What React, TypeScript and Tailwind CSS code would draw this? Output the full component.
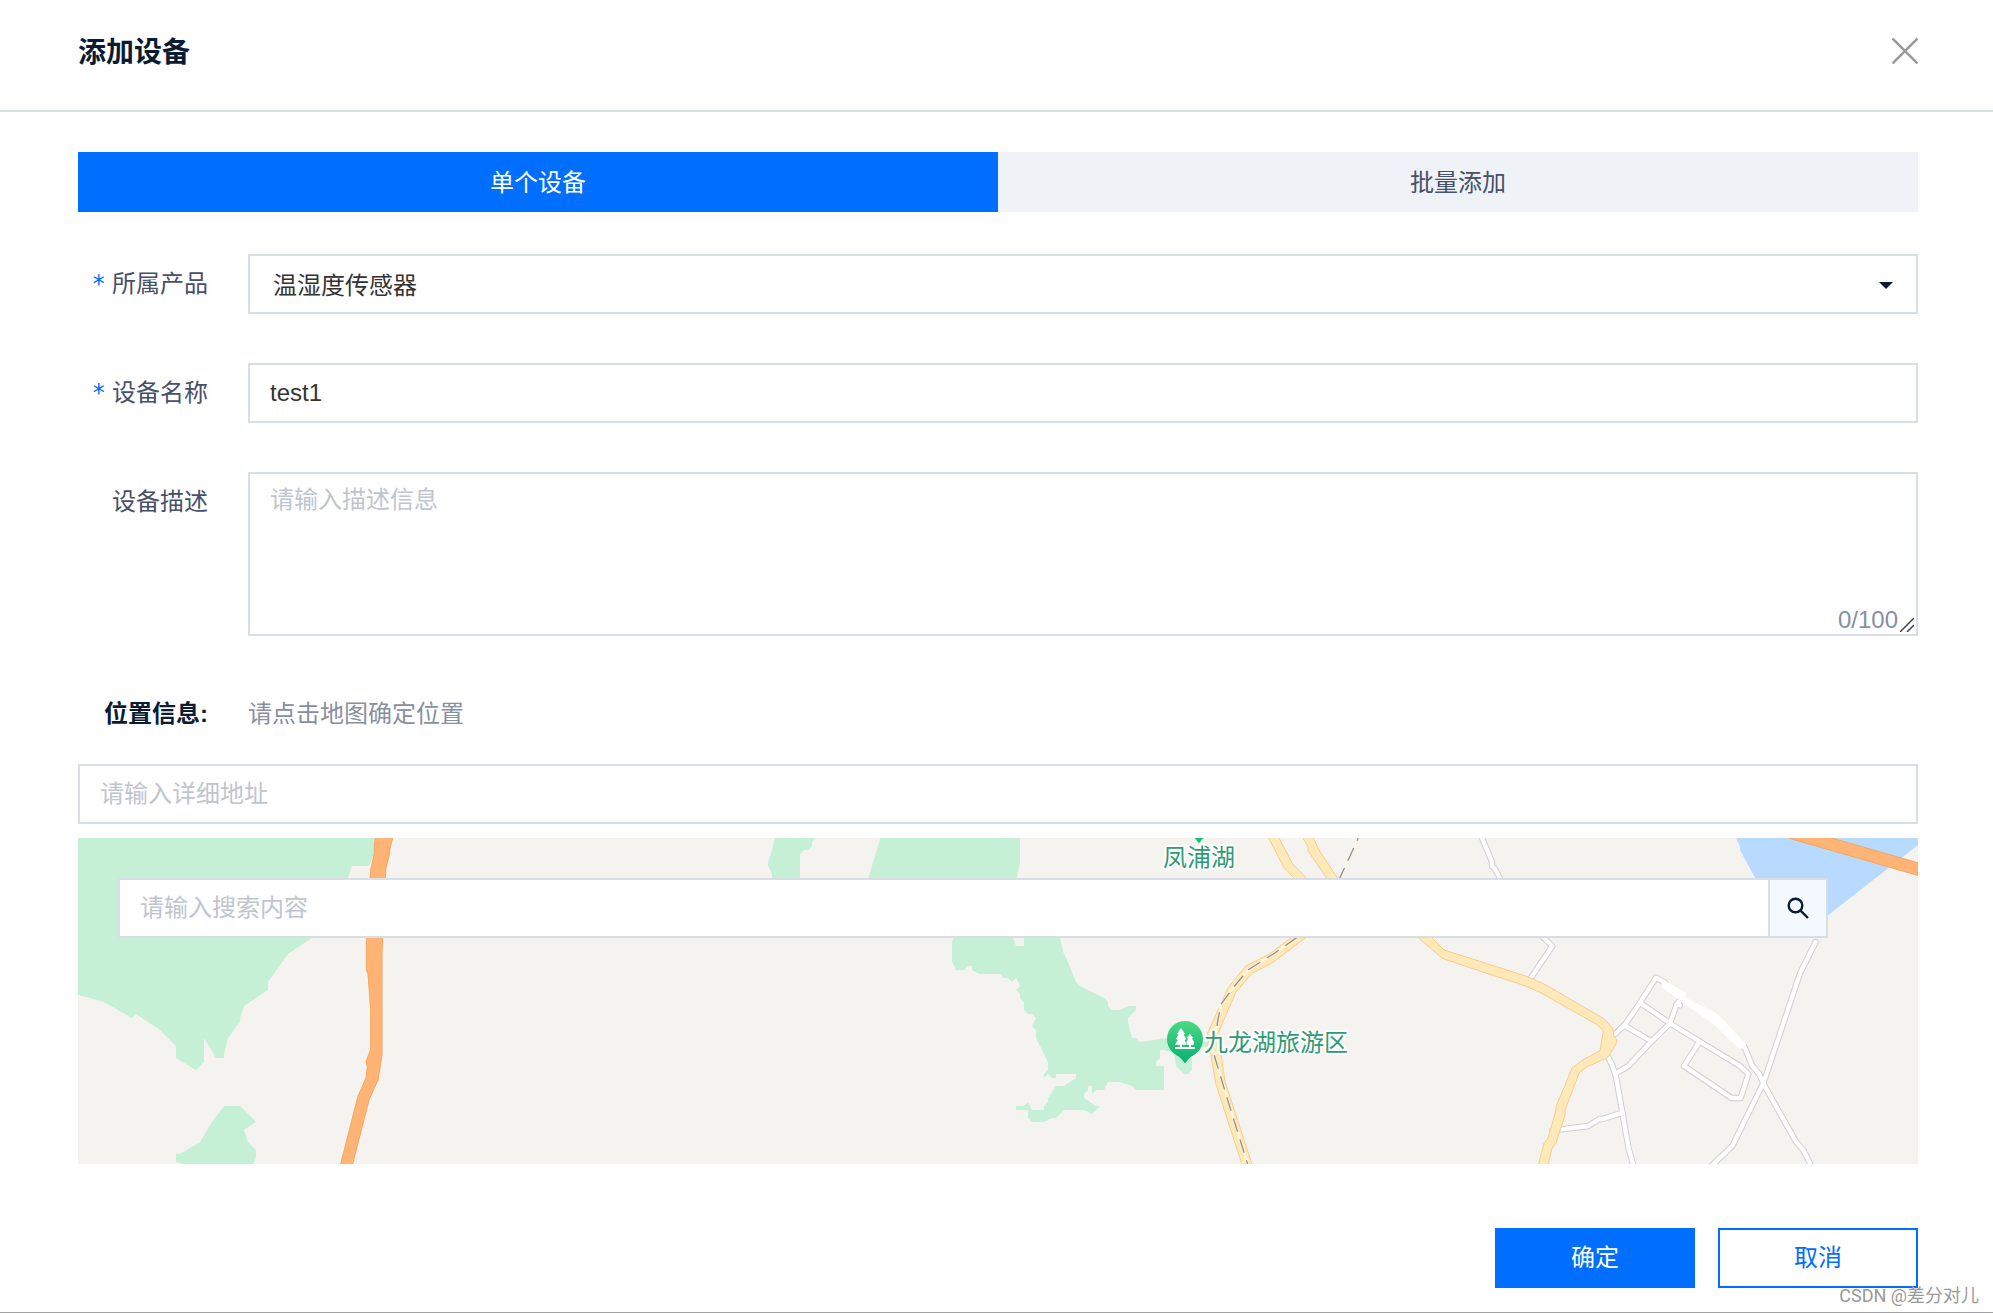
import React, { useState } from 'react';

const fieldClass =
    'block w-full h-[60px] px-5 border-2 border-[#d8dee7] bg-white text-2xl text-[#333333] placeholder-[#c0c5cd] outline-none focus:border-[#006eff]';

const MapCanvas: React.FC = () => (
    <svg
        className="block w-full h-[326px] bg-[#f4f3ef]"
        viewBox="0 0 1840 326"
        preserveAspectRatio="xMidYMid slice"
        role="img"
        aria-label="地图"
    >
        <defs>
            <linearGradient id="pin" x1="0" y1="0" x2="0" y2="1">
                <stop offset="0" stopColor="#4bd983" />
                <stop offset="1" stopColor="#08ae72" />
            </linearGradient>
        </defs>
        <g transform="scale(0.33333)">
            {/* west: forest and trunk road */}
            <g transform="translate(-54 -54)">
                <g fill="#c6f0d5">
                    <path d="M54 54H945L942 100L932 128L925 138H876L864 175L756 353L684 402L624 486V510L552 558L540 594V606L504 654L492 702V714H468L432 654V726L408 750L348 714V678L300 630L228 582L216 594L132 546L54 524Z" />
                    <path d="M492 858H540L588 905L552 930L564 966L588 990V1014L579 1032H372L348 1026V1002H360L420 966L456 906Z" />
                </g>
                <path
                    d="M947 50H999L989 90V100L978 145L976 175L968 353L966 400V705L954 780L927 840L877 1036H841L894 828L918 774L922 740L918 725L932 688V570L924 462L919 450V353L930 175L932 150L943 100V75Z"
                    fill="#ffb475"
                    stroke="#f8a55e"
                    strokeWidth="3"
                />
            </g>

            {/* centre: forest around the lake */}
            <g transform="translate(1866 -54)" fill="#c6f0d5">
                <path d="M225 54H348L336 66V78L324 90H312L300 102V175H216V162L204 138V126L216 90Z" />
                <path d="M541 54H960V126L950 175H505Z" />
                <path d="M760 353H940L948 378H972V353H1080L1091 400L1104 426L1128 486L1140 498L1200 528L1212 534L1224 546V558L1236 570H1260L1284 558H1308V570L1284 594V606L1296 654H1308L1320 666L1392 655L1525 666V678L1476 690V750L1464 762H1452L1428 738L1422 700L1392 690H1380V714L1368 726V738H1392V810H1308L1296 798L1260 786H1224L1212 810H1188L1176 822V798H1164V810L1152 822V834L1188 858H1200L1176 882L1152 870H1092L1068 894H1056L1032 906H996L984 894V870H948V858H972L984 846L996 870H1032V858L1044 846V834L1068 798H1092L1128 774V762H1068V774H1056L1044 762L1032 774V762L1044 750V726L1008 654V630L996 618L1008 594L996 582H984L972 570V546L960 534V522L948 510L960 498L948 474L936 486L924 474H912L900 462H840L816 450V438H804L792 450H768L756 426V366Z" />
            </g>

            {/* secondary roads, railway and pins */}
            <g transform="translate(3006 -54)">
                <g fill="#ffe9b8" stroke="#fbca8b" strokeWidth="3">
                    <path d="M564 50H595L637 130L684 179H647L612 143Z" />
                    <path d="M666 50H698L720 95L776 179H743L684 92V80Z" />
                    <path d="M633 353L564 405L498 437L444 504L423 552L382 640L407 790L487 1036H517L435 785L414 640L468 516L516 460L580 427L597 413L677 353Z" />
                </g>
                <g fill="none">
                    <path d="M835 54L800 130L779 175M650 353L580 402L505 449L462 500L423 553L413 605L398 690L440 830L503 1032" stroke="#fff6e0" strokeWidth="7" />
                    <path d="M835 54L800 130L779 175" stroke="#8f8f8f" strokeWidth="4" strokeDasharray="42 24" strokeDashoffset="33" />
                    <path d="M650 353L580 402L505 449L462 500L423 553L413 605L398 690L440 830L503 1032" stroke="#8f8f8f" strokeWidth="4" strokeDasharray="42 24" />
                </g>
                <path d="M344 54H370L357 70Z" fill="#0fc47b" />
                <path d="M315 603A54 54 0 0 1 369 657C369 684 351 702 333 710Q325 716 315 730Q305 716 297 710C279 702 261 684 261 657A54 54 0 0 1 315 603Z" fill="url(#pin)" />
                <g fill="#ffffff">
                    <path d="M303 624L315 641L311 644L319 657L314 660L320 674H306V682H299V674H285L293 660L288 657L295 644L291 641Z" />
                    <path d="M330 641L339 653L336 656L343 667L340 675H333V682H327V675H322L319 667L324 656L321 653Z" />
                    <rect x="285" y="681" width="60" height="6" rx="2" />
                </g>
            </g>

            {/* east: lake, town streets */}
            <g transform="translate(4206 -54)">
                <path d="M768 54H1314V75L1044 286H880L826 175L780 90V78Z" fill="#b8daff" />
                <path d="M911 50H1041L1320 130V168Z" fill="#ffb475" stroke="#f8a55e" strokeWidth="3" />
                <g fill="none" strokeLinejoin="round">
                    {['#cfcfd5', '#ffffff'].map((color, i) => (
                        <g key={color} stroke={color} strokeWidth={i === 0 ? 19 : 13} strokeLinecap="round">
                            <path d="M2 44L36 125V138L45 147L64 182" />
                            <path d="M185 348L217 378L150 478" />
                            <path d="M405 642L435 614L480 548L528 473L555 488" />
                            <path d="M480 548L570 610L780 738L805 762L782 834H755L612 738L658 666" />
                            <path d="M435 618L515 664" />
                            <path d="M600 556L590 553L570 610L515 664L445 738L408 760M590 553L603 538" />
                            <path d="M382 705L398 740L408 770L446 985L462 1042" />
                            <path d="M217 931L325 918L360 896L364 898L428 878" />
                            <path d="M1007 366L960 460L852 785L757 978L690 1042" />
                            <path d="M793 680L817 738L838 762L855 800L948 965L970 990L996 1042" />
                        </g>
                    ))}
                </g>
                <path d="M545 478L618 518V534L703 576L735 604L799 674L793 688L775 684L700 612L612 550L545 502Z" fill="#ffffff" />
                <path
                    d="M-185 353L-113 415L0 453L134 497L180 517L330 602L350 613L370 632L360 692L312 718L288 735L276 745L228 860V870L204 955L192 970L175 1036H204L216 985L228 970L255 885V870L298 758L322 740L376 716L385 710L408 672L410 660L401 645L398 625L370 595L192 492L142 470L0 424L-108 390L-145 353Z"
                    fill="#ffe9b8"
                    stroke="#fbca8b"
                    strokeWidth="3"
                />
            </g>
        </g>
        <g className="text-2xl" fill="#2e9a74" stroke="#ffffff" strokeWidth="4" strokeLinejoin="round" paintOrder="stroke">
            <text x="1085" y="28">凤浦湖</text>
            <text x="1126" y="213">九龙湖旅游区</text>
        </g>
    </svg>
);

interface FormRowProps {
    label: string;
    htmlFor: string;
    required?: boolean;
    children: React.ReactNode;
}

const FormRow: React.FC<FormRowProps> = ({ label, htmlFor, required, children }) => (
    <div className="flex items-start gap-10">
        <label htmlFor={htmlFor} className="flex w-[130px] shrink-0 items-center justify-end gap-1.5 pt-3 text-2xl leading-9 text-[#475069]">
            {required && <span className="font-['DejaVu_Sans_Mono',monospace] text-[#006eff]">*</span>}
            {label}
        </label>
        <div className="relative min-w-0 flex-1">{children}</div>
    </div>
);

export default function App() {
    const [tab, setTab] = useState<'single' | 'batch'>('single');
    const [product, setProduct] = useState('温湿度传感器');
    const [name, setName] = useState('test1');
    const [description, setDescription] = useState('');

    const tabClass = (active: boolean) =>
        `flex-1 h-[60px] pt-0.5 text-2xl ${active ? 'bg-[#006eff] text-white' : 'bg-[#eff3f8] text-[#475069]'}`;

    return (
        <div className="relative border-b border-[#a3a3a3] bg-white font-['Liberation_Sans','Noto_Sans_CJK_SC',sans-serif]">
            <header className="flex h-28 items-center justify-between border-b-2 border-[#d8dee7] pb-2 pl-[78px] pr-[75px]">
                <h1 className="pt-1 text-[28px] leading-10 font-bold text-[#0a1c33]">添加设备</h1>
                <button type="button" aria-label="关闭">
                    <svg className="h-[26px] w-[26px]" viewBox="0 0 26 26" fill="none" stroke="#999999" strokeWidth="2.5">
                        <path d="M0.5 0.5L25.5 25.5M25.5 0.5L0.5 25.5" />
                    </svg>
                </button>
            </header>

            <form className="pt-10 pb-6 pl-[78px] pr-[75px]" onSubmit={(e) => e.preventDefault()}>
                <div className="flex">
                    <button type="button" className={tabClass(tab === 'single')} onClick={() => setTab('single')}>
                        单个设备
                    </button>
                    <button type="button" className={tabClass(tab === 'batch')} onClick={() => setTab('batch')}>
                        批量添加
                    </button>
                </div>

                <div className="mt-[42px] flex flex-col gap-[49px]">
                    <FormRow label="所属产品" htmlFor="product" required>
                        <select
                            id="product"
                            value={product}
                            onChange={(e) => setProduct(e.target.value)}
                            className="block h-[60px] w-full appearance-none border-2 border-[#d8dee7] bg-white px-[23px] pt-1 text-2xl text-[#333333] outline-none"
                        >
                            <option>温湿度传感器</option>
                        </select>
                        <svg className="pointer-events-none absolute top-7 right-[25px] h-[7px] w-[14px]" viewBox="0 0 14 7" fill="#0a1c33">
                            <path d="M0 0H14L7 7Z" />
                        </svg>
                    </FormRow>

                    <FormRow label="设备名称" htmlFor="name" required>
                        <input id="name" type="text" value={name} onChange={(e) => setName(e.target.value)} className={fieldClass} />
                    </FormRow>

                    <FormRow label="设备描述" htmlFor="description">
                        <textarea
                            id="description"
                            maxLength={100}
                            placeholder="请输入描述信息"
                            value={description}
                            onChange={(e) => setDescription(e.target.value)}
                            className="block h-[164px] w-full resize-none border-2 border-[#d8dee7] bg-white px-5 py-2 text-2xl leading-9 text-[#333333] placeholder-[#c0c5cd] outline-none"
                        />
                        <span className="absolute right-5 bottom-0 text-2xl leading-8 text-[#888fa0]">{description.length}/100</span>
                        <svg className="pointer-events-none absolute right-1 bottom-1 h-[14px] w-[14px]" viewBox="0 0 14 14" stroke="#444444" strokeWidth="1.5">
                            <path d="M0 14L14 0M7 14L14 7" />
                        </svg>
                    </FormRow>
                </div>

                <div className="mt-[60px] flex gap-10 text-2xl leading-9">
                    <label htmlFor="address" className="w-[130px] shrink-0 text-right font-bold text-[#0a1c33]">位置信息:</label>
                    <p className="text-[#888fa0]">请点击地图确定位置</p>
                </div>
                <input id="address" type="text" placeholder="请输入详细地址" className={`${fieldClass} mt-8`} />

                <div className="relative mt-[14px]">
                    <MapCanvas />
                    <div className="absolute top-10 right-[90px] left-10 flex">
                        <input type="text" aria-label="搜索" placeholder="请输入搜索内容" className={`${fieldClass} min-w-0 flex-1 border-r-0`} />
                        <button type="button" aria-label="搜索地图" className="flex h-[60px] w-[60px] items-center justify-center border-2 border-[#d8dee7] bg-[#f4f9ff]">
                            <svg className="h-[22px] w-[22px]" viewBox="0 0 22 22" fill="none" stroke="#0a1c33" strokeWidth="2.4">
                                <circle cx="8.5" cy="8.5" r="6.8" />
                                <path d="M13.3 13.3L21 21" />
                            </svg>
                        </button>
                    </div>
                </div>

                <div className="mt-16 flex justify-end gap-[23px] text-2xl">
                    <button type="submit" className="h-[60px] w-[200px] bg-[#006eff] text-white">确定</button>
                    <button type="button" className="h-[60px] w-[200px] border-2 border-[#006eff] bg-white text-[#006eff]">取消</button>
                </div>
            </form>

            <span className="pointer-events-none absolute right-[14px] bottom-1 font-[Roboto,'Noto_Sans_CJK_SC',sans-serif] text-lg leading-6 text-[#999999] [text-shadow:1px_1px_0_#ffffff]">
                CSDN @差分对儿
            </span>
        </div>
    );
}
